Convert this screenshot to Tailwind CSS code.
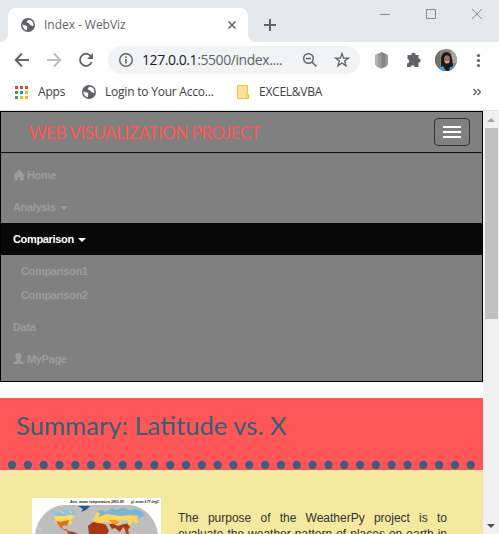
<!DOCTYPE html>
<html lang="en">
<head>
<meta charset="utf-8">
<title>Index - WebViz</title>
<script src="https://cdn.jsdelivr.net/npm/@tailwindcss/browser@4"></script>
</head>
<body class="w-[499px] h-[534px] overflow-hidden bg-white font-['Open_Sans',sans-serif] flex flex-col">
<svg class="hidden">
  <symbol id="globe" viewBox="0 0 14 14"><circle cx="7" cy="7" r="7" fill="#5f6368"/><path d="M1.5 6.3C3 7.6 5 7.2 6.2 8.2C7 9 5.3 9.8 6 11.6C6.3 12.4 5.5 12.3 4.8 12C2.6 11 1.2 9 1.5 6.3ZM8.3 1.7C6.5 2 5.2 3.2 5.8 4.3C6.5 5.3 8 4.5 8.4 6C8.8 7.6 10.4 6.9 11.6 7.9C12.3 8.5 12.7 6.8 12.3 5.4C11.8 3.7 10.4 2.1 8.3 1.7Z" fill="#fff"/></symbol>
</svg>

<!-- tab strip -->
<header class="h-[42px] shrink-0 bg-[#e4e8eb] flex items-end">
  <div class="w-2 h-[34px] flex items-end"><div class="w-2 h-2 bg-white"><div class="w-2 h-2 bg-[#e4e8eb] rounded-br-lg"></div></div></div>
  <div class="w-[240px] h-[34px] bg-white rounded-t-lg flex items-center pl-[13px] pr-[11px]">
    <svg class="w-[14px] h-[14px]"><use href="#globe"/></svg>
    <span class="ml-[9px] text-[12px] leading-4 text-[#5f6368] whitespace-nowrap tracking-[-0.04px]">Index - WebViz</span>
    <svg class="ml-auto w-[10px] h-[10px]" viewBox="0 0 10 10"><path d="M1.5 1.5L8.5 8.5M8.5 1.5L1.5 8.5" stroke="#5f6368" stroke-width="1.6"/></svg>
  </div>
  <div class="w-2 h-2 bg-white"><div class="w-2 h-2 bg-[#e4e8eb] rounded-bl-lg"></div></div>
  <svg class="w-[243px] h-[42px]" viewBox="256 0 243 42" fill="none"><path d="M264 25H276M270 19V31" stroke="#5f6368" stroke-width="2"/><path d="M380 14.5H390M426.500 9.500H435.500V18.500H426.500ZM472 9L482 19M482 9L472 19" stroke="#858a8e"/></svg>
</header>

<!-- toolbar -->
<div class="h-[35px] shrink-0 flex items-center pl-[14px] pt-[1px]">
  <svg class="w-[84px] h-[20px] shrink-0" viewBox="14 50 84 20" fill="none" stroke-width="1.9"><path d="M29 60H16M22 53.500L15.700 60L22 66.500" stroke="#5f6368"/><path d="M47 60H60M54 53.500L60.300 60L54 66.500" stroke="#babcbe"/><path d="M91.300 57A6 6 0 1 0 91.600 62" stroke="#5f6368"/><path d="M93 53V59H87Z" fill="#5f6368"/></svg>
  <div class="ml-[10px] w-[252px] h-7 mt-[-1px] rounded-full bg-[#f1f3f4] flex items-center pl-[11px] pr-[9px]">
    <svg class="w-[14px] h-[14px] shrink-0" viewBox="0 0 14 14" fill="none" stroke="#5f6368" stroke-width="1.4"><circle cx="7" cy="7" r="6.300"/><path d="M7 6V10.500M7 3.500V5" stroke-width="1.6"/></svg>
    <span class="ml-[9px] text-[14px] leading-5 text-[#5f6368] whitespace-nowrap tracking-[-0.43px]"><span class="text-[#202124]">127.0.0.1</span>:5500/index....</span>
    <svg class="ml-auto w-[48px] h-[16px] shrink-0" viewBox="303 52 48 16" fill="none" stroke="#5f6368" stroke-width="1.5"><circle cx="308.500" cy="58.500" r="4.800"/><path d="M312 62L316.500 66.500M306 58.500H311"/><path d="M342 53.500L343.600 58.100H348.400L344.600 61L346 65.800L342 63L338 65.800L339.400 61L335.600 58.100H340.400Z" stroke-width="1.300"/></svg>
  </div>
  <svg class="ml-[14px] w-[120px] h-[24px] shrink-0" viewBox="374 48 120 24">
    <path d="M381.500 52L388 55V64Q387 67 381.500 68.500Q376 67 375 64V55Z" fill="#9b9b9b"/><path d="M381.500 52L385.500 54V66L381.500 68.500Z" fill="#858585"/><path d="M378 53.500V67L375 64V55Z" fill="#b4b4b4"/>
    <path d="M407.500 55H411.300A2.200 2.200 0 0 1 415.700 55H418.500V58.400A2.200 2.200 0 0 1 418.500 62.800V67H415A2.300 2.300 0 0 0 410.500 67H407V63.500A2.300 2.300 0 0 0 407.500 59Z" fill="#5f6368"/>
    <clipPath id="av"><circle cx="446" cy="60" r="11"/></clipPath>
    <g clip-path="url(#av)"><rect x="435" y="49" width="22" height="22" fill="#8b8580"/><path d="M435 49H440V71H435Z" fill="#77706b"/><path d="M451 49H457V63H451Z" fill="#aaa49e"/><path d="M440 71C442 68 440 58 442 55C444 51 449 51 451 55C453 60 452 67 455 71Z" fill="#1c1719"/><ellipse cx="447" cy="59.500" rx="3" ry="4.200" fill="#a06b57"/><path d="M438 69L443 66L446 71H436ZM450 67L455 66V71H449Z" fill="#4b9de8"/><path d="M445 61.500Q447 63 449 61.500" stroke="#f4dfd8" fill="none"/></g>
    <g fill="#5f6368"><circle cx="478.500" cy="55.500" r="1.600"/><circle cx="478.500" cy="60.500" r="1.600"/><circle cx="478.500" cy="65.500" r="1.600"/></g>
  </svg>
</div>

<!-- bookmarks -->
<div class="h-[34px] shrink-0 flex items-center pl-[15px] pb-[3px] text-[12px] leading-4 text-[#3c4043] whitespace-nowrap border-b border-[#dcdedf]">
  <div class="grid grid-cols-3 gap-[2px] w-[13px] shrink-0">
    <i class="h-[3px] bg-[#ea4335]"></i><i class="h-[3px] bg-[#ea4335]"></i><i class="h-[3px] bg-[#ea4335]"></i>
    <i class="h-[3px] bg-[#34a853]"></i><i class="h-[3px] bg-[#1a8cf0]"></i><i class="h-[3px] bg-[#f9b90a]"></i>
    <i class="h-[3px] bg-[#34a853]"></i><i class="h-[3px] bg-[#f9b90a]"></i><i class="h-[3px] bg-[#f9b90a]"></i>
  </div>
  <span class="ml-[10px] w-[44px] tracking-[-0.2px]">Apps</span>
  <svg class="w-[14px] h-[14px] shrink-0"><use href="#globe"/></svg>
  <span class="ml-[9px] w-[132px] tracking-[-0.22px]">Login to Your Acco...</span>
  <svg class="w-3 h-[14px] shrink-0" viewBox="0 0 12 14"><path d="M.5.5H10.500V9.500H11.500V13.500H.5Z" fill="#fee394" stroke="#e8c342"/><path d="M9.500 13V9.500H11.500" fill="none" stroke="#e8c342"/></svg>
  <span class="ml-[10px] tracking-[-0.25px]">EXCEL&amp;VBA</span>
  <svg class="ml-auto mr-[18px] w-2 h-2" viewBox="0 0 8 8" fill="none" stroke="#5f6368" stroke-width="1.500"><path d="M.5 1L3.500 4L.5 7M4.500 1L7.500 4L4.500 7"/></svg>
</div>

<div class="flex flex-1 min-h-0">
  <main class="w-[483px] shrink-0 overflow-hidden">
    <nav class="h-[271px] border border-black bg-[#808080] font-['Liberation_Sans',sans-serif] font-bold text-[11px] leading-4 text-[#9d9d9d]">
      <div class="h-[41px] border-b border-[#101010] flex items-center justify-between pl-[28px] pr-3">
        <span class="font-['Lato',sans-serif] font-normal text-[18px] leading-5 text-[#ff5757] tracking-[-0.5px] whitespace-nowrap origin-left scale-x-[0.944]">WEB VISUALIZATION PROJECT</span>
        <button class="w-9 h-7 rounded-[4px] border border-[#333] flex flex-col items-center justify-center gap-[3px]" aria-label="Menu">
          <i class="w-[18px] h-[2px] bg-white"></i><i class="w-[18px] h-[2px] bg-white"></i><i class="w-[18px] h-[2px] bg-white"></i>
        </button>
      </div>
      <ul class="border-t border-[#777] pt-[5px] tracking-[-0.34px]">
        <li class="h-8 px-3 flex items-center"><svg class="w-3 h-3 mr-[2px]" viewBox="0 0 12 12" fill="#9d9d9d"><path d="M6 .5L12 6.500H10.500V11.500H7.200V8H4.800V11.500H1.500V6.500H0Z"/></svg>Home</li>
        <li class="h-8 px-3 flex items-center">Analysis<i class="ml-[4px] mt-[2px] border-x-[4px] border-x-transparent border-t-[4px] border-t-[#9d9d9d]"></i></li>
        <li class="h-8 px-3 flex items-center bg-[#080808] text-white">Comparison<i class="ml-[4px] mt-[2px] border-x-[4px] border-x-transparent border-t-[4px] border-t-white"></i></li>
        <li class="h-14 pt-1 px-5"><div class="h-6 flex items-center">Comparison1</div><div class="h-6 flex items-center">Comparison2</div></li>
        <li class="h-8 px-3 flex items-center">Data</li>
        <li class="h-8 px-3 flex items-center"><svg class="w-[11px] h-3 mr-[3px]" viewBox="0 0 11 12" fill="#9d9d9d"><path d="M5.500 0C8.800 0 8.800 3 8.300 5C8 6.200 7.200 6.500 7.200 7.500C7.500 8.500 11 8.500 11 11H0C0 8.500 3.500 8.500 3.800 7.500C3.800 6.500 3 6.200 2.700 5C2.200 3 2.200 0 5.500 0Z"/></svg>MyPage</li>
      </ul>
    </nav>
    <section class="mt-4 h-[72px] bg-[#ff5757] flex flex-col justify-between pt-[9px]">
      <h1 class="ml-4 w-max font-['Lato',sans-serif] text-[25px] leading-9 text-[#355f76] whitespace-nowrap origin-left scale-x-[1.026]">Summary: Latitude vs. X</h1>
      <svg class="w-[483px] h-[10px]" viewBox="0 0 483 10"><path d="M12 5H471" stroke="#36627a" stroke-width="8.400" stroke-linecap="round" stroke-dasharray="0 15.820"/></svg>
    </section>
    <section class="h-16 bg-[#f4e99f] flex pl-8 pr-9 pt-7">
      <svg class="w-[129px] h-9 shrink-0" viewBox="0 0 129 36">
        <rect width="129" height="36" fill="#fff"/>
        <g font-family="Liberation Sans" font-weight="bold" font-style="italic" fill="#222"><text x="38" y="5.300" font-size="4.200" textLength="54" lengthAdjust="spacingAndGlyphs">Ann. mean temperature 1951-80</text><text x="99" y="5.300" font-size="3.200" textLength="28" lengthAdjust="spacingAndGlyphs">gl. mean 8.77 degC</text></g>
        <clipPath id="m"><path d="M3 36C5 22 15 8 32 7H97C114 8 124 22 126 36Z"/></clipPath>
        <g clip-path="url(#m)"><rect y="6" width="129" height="30" fill="#bebebe"/>
          <path d="M18 13L22 12L26 14L30 11L35 12L38 10L42 13L46 17L42 18L38 20H23L21 16Z" fill="#8fc3dc"/>
          <path d="M46 8L58 8L54 12L49 14L51 11Z" fill="#1e5897"/>
          <path d="M64 18L66 13L70 12L74 14L80 10L84 12L91 10L97 12L104 11L111 14L113 18L106 20H66Z" fill="#75b6d9"/>
          <path d="M22 18H32L39 17L44 18L39 22L40 26L34 25L29 29L24 25Z" fill="#ffdb58"/>
          <path d="M60 22L62 20L65 14L68 15L67 19L74 16L82 17L89 18L98 17L107 18L104 21L107 24L103 26L102 23L96 29L90 25L82 28L76 24L65 25Z" fill="#ffd65a"/>
          <path d="M24 23L28 24L32 23L37 22L36 26L34 28L32 27L30 29L31 31L35 31L36 34L30 31L27 28Z" fill="#e16c1e"/>
          <path d="M56 28L61 24L72 26L74 27L77 33L75 36H57ZM77 26L82 26L86 28L95 25L98 29L95 33L91 29L88 34L83 30L80 31Z" fill="#a93810"/>
          <path d="M35 33L42 34L46 36H36ZM92 29L96 31L97 36H94Z" fill="#b9430f"/>
          <path d="M86 22L92 23L95 22L97 25L92 26Z" fill="#98d2e4"/>
          <path d="M77 22L84 22L88 24L86 26L80 26Z" fill="#f49b2a"/>
          <path d="M6 30L9 31M28 13L32 15M37 12L40 15" stroke="#d4dce0" stroke-width="1"/>
        </g>
      </svg>
      <div class="ml-[17px] w-[269px] pt-[12px] font-['Liberation_Sans',sans-serif] text-[12px] leading-4 text-[#333] whitespace-nowrap">
        <p class="[text-align-last:justify]">The purpose of the WeatherPy project is to</p>
        <p class="[text-align-last:justify]">evaluate the weather pattern of places on earth in</p>
      </div>
    </section>
  </main>
  <aside class="w-4 bg-[#f1f1f1] flex flex-col items-center">
    <i class="mt-[7px] border-x-[4px] border-x-transparent border-b-[4px] border-b-[#a3a3a3]"></i>
    <div class="mt-[6px] w-[13px] h-[191px] bg-[#c1c1c1]"></div>
    <i class="mt-auto mb-[6px] border-x-[4px] border-x-transparent border-t-[4px] border-t-[#505050]"></i>
  </aside>
</div>
</body>
</html>
